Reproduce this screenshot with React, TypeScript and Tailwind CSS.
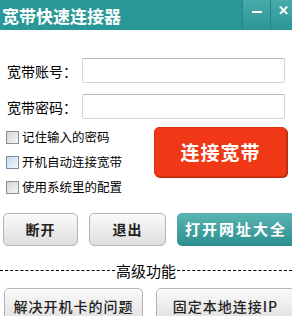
const cjk = { fontFamily: '"Noto Sans CJK SC", "Noto Sans", sans-serif' };

function CheckBox({ label, blue }: { label: string; blue?: boolean }) {
  return (
    <label className="flex items-center h-[25px]">
      <span
        className={`w-[13px] h-[13px] border ${
          blue ? "border-[#7a8fa6] bg-gradient-to-br from-[#c7d9ea] to-[#f4f8fb]" : "border-[#8e8e8e] bg-gradient-to-br from-[#d4d4d4] to-[#f7f7f7]"
        }`}
      />
      <span className="ml-[3px] text-[12.5px] text-black leading-none">{label}</span>
    </label>
  );
}

function GrayButton({ text, className }: { text: string; className: string }) {
  return (
    <button
      className={`shrink-0 rounded-[5px] border border-[#b4b4b4] bg-gradient-to-b from-[#fafafa] to-[#dedede] text-[#222] tracking-[1px] whitespace-nowrap ${className}`}
    >
      {text}
    </button>
  );
}

export default function App() {
  return (
    <div className="w-[292px] h-[316px] bg-white overflow-hidden flex flex-col" style={cjk}>
      <div className="h-[30px] bg-[#2a9797] flex items-stretch shrink-0">
        <div className="flex-1 flex items-center pl-[2px] text-white text-[17px] font-bold leading-none">宽带快速连接器</div>
        <div className="w-[28px] flex items-center justify-center border-l border-[#238585] bg-gradient-to-b from-[#48aaaa] to-[#2c9696]">
          <div className="w-[10px] h-[2px] bg-white mb-[6px]" />
        </div>
        <div className="w-[22px] flex items-start justify-center border-l border-[#238585] bg-gradient-to-b from-[#48aaaa] to-[#2c9696] text-white text-[13px] font-bold leading-none pt-[3px] pl-[4px]">
          ✕
        </div>
      </div>

      <div className="flex flex-col gap-[11px] mt-[28px] pl-[7px]">
        <div className="flex items-center">
          <span className="w-[75px] text-[14px] text-black leading-none">宽带账号：</span>
          <input className="w-[203px] h-[25px] border border-[#d4d4d4] border-t-[#b9b9b9] rounded-[2px] outline-none" />
        </div>
        <div className="flex items-center">
          <span className="w-[75px] text-[14px] text-black leading-none">宽带密码：</span>
          <input className="w-[203px] h-[25px] border border-[#d4d4d4] border-t-[#b9b9b9] rounded-[2px] outline-none" />
        </div>
      </div>

      <div className="flex mt-[6px] pl-[6px]">
        <div className="flex flex-col">
          <CheckBox label="记住输入的密码" />
          <CheckBox label="开机自动连接宽带" blue />
          <CheckBox label="使用系统里的配置" />
        </div>
        <button className="ml-auto mr-[5px] mt-[2px] w-[133px] h-[50px] rounded-[5px] bg-[#f13816] border border-[#d8300f] shadow-[1px_1px_0_#b52a10] text-white text-[19px] font-bold tracking-[1px]">
          连接宽带
        </button>
      </div>

      <div className="flex mt-[13px] pl-[3px] gap-[11px]">
        <GrayButton text="断开" className="w-[75px] h-[33px] text-[14px] font-bold" />
        <GrayButton text="退出" className="w-[77px] h-[33px] text-[14px] font-bold" />
        <button className="shrink-0 w-[124px] h-[33px] rounded-[5px] bg-gradient-to-b from-[#5bb4b4] to-[#2a8e8e] text-white text-[15px] font-bold tracking-[2px] whitespace-nowrap pr-[6px]">
          打开网址大全
        </button>
      </div>

      <div className="flex items-center mt-[17px]">
        <div className="flex-1 border-t border-dashed border-black" />
        <span className="text-[15px] text-black leading-none px-[1px]">高级功能</span>
        <div className="flex-1 border-t border-dashed border-black" />
      </div>

      <div className="flex mt-[10px] pl-[4px] gap-[13px]">
        <GrayButton text="解决开机卡的问题" className="w-[139px] h-[36px] text-[14px] font-medium" />
        <GrayButton text="固定本地连接IP" className="w-[139px] h-[36px] text-[14px] font-medium" />
      </div>
    </div>
  );
}
